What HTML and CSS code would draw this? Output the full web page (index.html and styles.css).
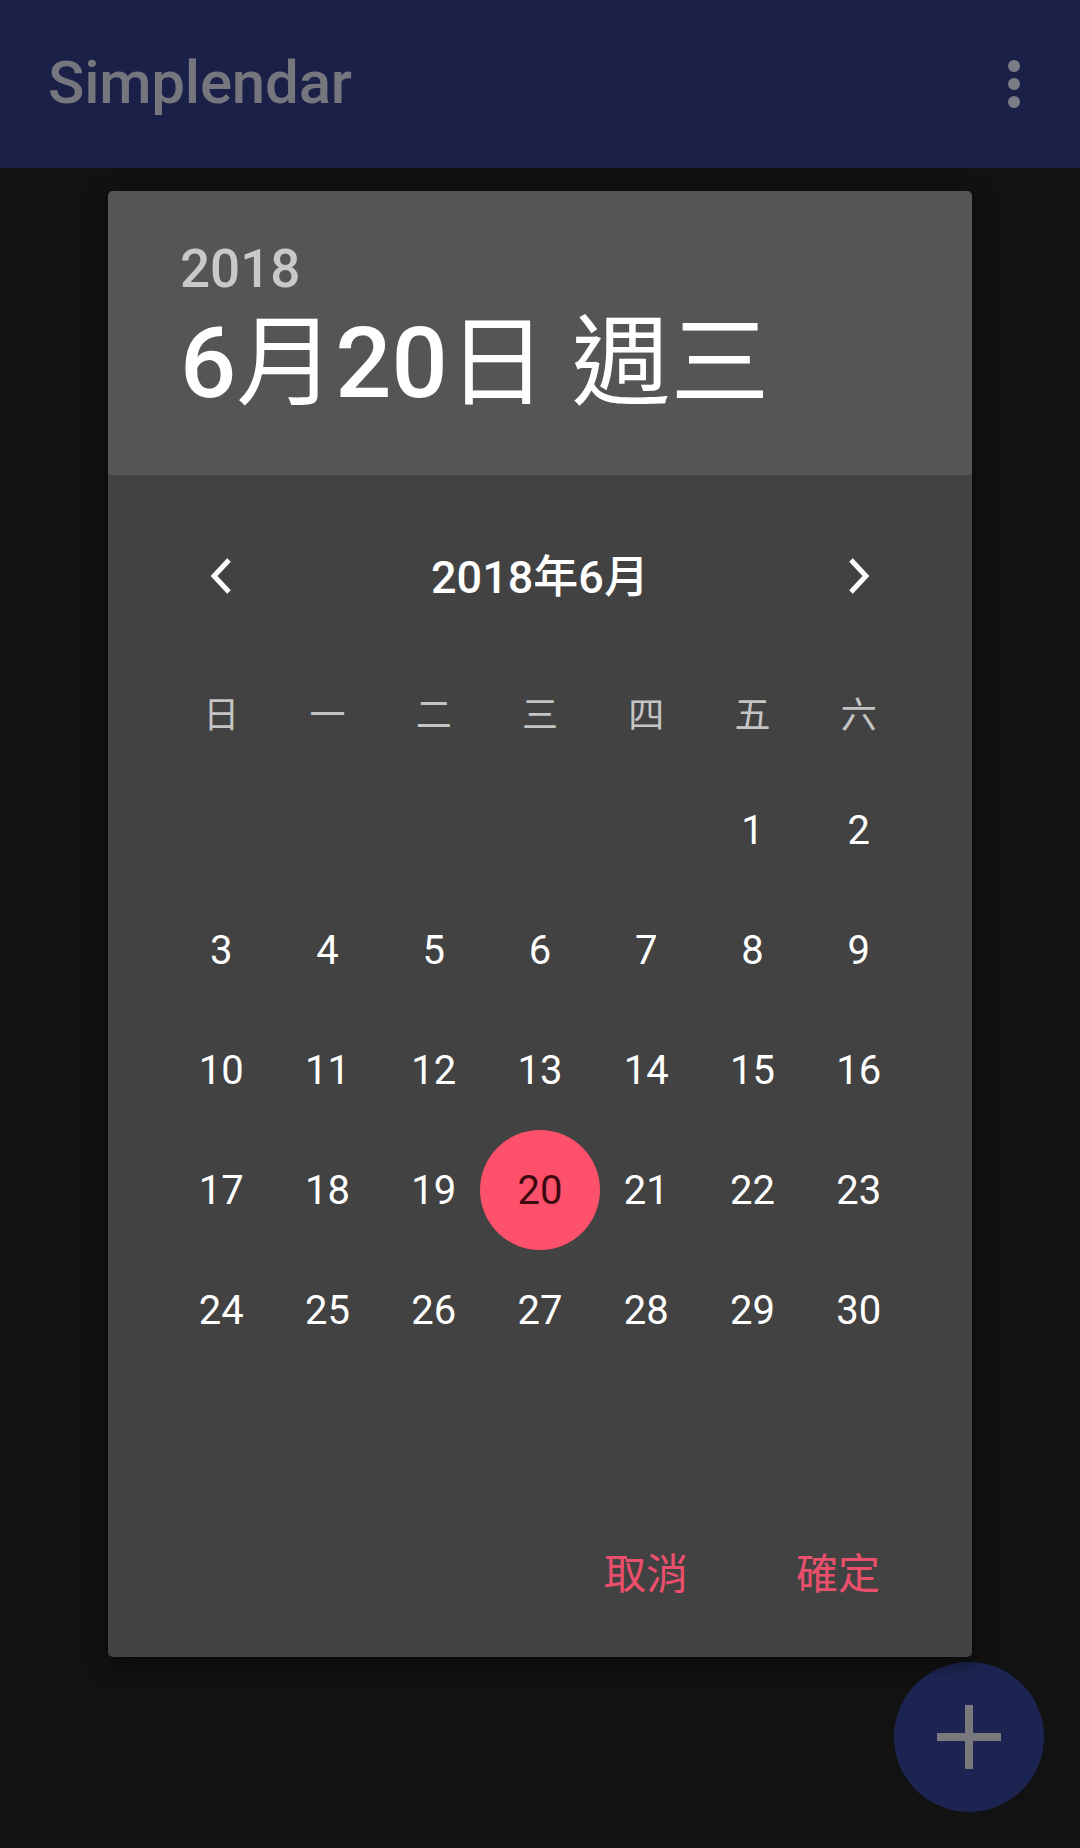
FILE: index.html
```html
<!DOCTYPE html>
<html lang="zh-Hant">
<head>
<meta charset="utf-8">
<title>Simplendar</title>
<link rel="stylesheet" href="styles.css">
</head>
<body>
<div class="app">
  <header class="appbar">
    <h1 class="appbar-title">Simplendar</h1>
    <button class="overflow" aria-label="更多選項">
      <span class="dot"></span><span class="dot"></span><span class="dot"></span>
    </button>
  </header>
  <main class="content"></main>
  <button class="fab" aria-label="新增">
    <svg viewBox="0 0 64 64" width="64" height="64"><path d="M32 0V64M0 32H64" stroke="#7a7a7e" stroke-width="8" fill="none"/></svg>
  </button>
</div>

<div class="dialog" role="dialog">
  <div class="dlg-header">
    <div class="dlg-year">2018</div>
    <div class="dlg-date">6<span class="cjk">月</span>20<span class="cjk">日 週三</span></div>
  </div>
  <div class="dlg-body">
    <div class="month-nav">
      <button class="chev" aria-label="上個月">
        <svg viewBox="0 0 24 36" width="24" height="36"><path d="M20 2L5 18L20 34" stroke="#fff" stroke-width="5" fill="none"/></svg>
      </button>
      <div class="month-label">2018年6月</div>
      <button class="chev" aria-label="下個月">
        <svg viewBox="0 0 24 36" width="24" height="36"><path d="M4 2L19 18L4 34" stroke="#fff" stroke-width="5" fill="none"/></svg>
      </button>
    </div>
    <div class="weekdays">
      <span>日</span><span>一</span><span>二</span><span>三</span><span>四</span><span>五</span><span>六</span>
    </div>
    <div class="days">
      <span></span><span></span><span></span><span></span><span></span><span>1</span><span>2</span>
      <span>3</span><span>4</span><span>5</span><span>6</span><span>7</span><span>8</span><span>9</span>
      <span>10</span><span>11</span><span>12</span><span>13</span><span>14</span><span>15</span><span>16</span>
      <span>17</span><span>18</span><span>19</span><span class="selected">20</span><span>21</span><span>22</span><span>23</span>
      <span>24</span><span>25</span><span>26</span><span>27</span><span>28</span><span>29</span><span>30</span>
    </div>
    <div class="actions">
      <button class="btn">取消</button>
      <button class="btn">確定</button>
    </div>
  </div>
</div>
</body>
</html>
```
FILE: styles.css
```css
* { box-sizing: border-box; }
html, body {
  margin: 0;
  padding: 0;
  width: 1080px;
  height: 1848px;
  background: #121212;
  font-family: Roboto, "Noto Sans CJK TC", sans-serif;
  overflow: hidden;
}
button {
  font-family: inherit;
  border: 0;
  background: none;
  padding: 0;
  margin: 0;
  cursor: pointer;
}
.app {
  height: 1848px;
  display: flex;
  flex-direction: column;
}
.appbar {
  height: 168px;
  background: #1b2049;
  display: flex;
  align-items: center;
  padding: 0 30px 0 48px;
  flex: none;
}
.appbar-title {
  margin: 0;
  font-size: 60px;
  font-weight: 500;
  color: #76767e;
  flex: 1;
  letter-spacing: -0.2px;
  transform: translateY(-2px);
}
.overflow {
  width: 72px;
  height: 72px;
  display: flex;
  flex-direction: column;
  align-items: center;
  justify-content: center;
  gap: 6px;
}
.dot {
  width: 12px;
  height: 12px;
  border-radius: 50%;
  background: #7b7c84;
}
.content { flex: 1; }
.fab {
  position: absolute;
  left: 894px;
  top: 1662px;
  width: 150px;
  height: 150px;
  border-radius: 50%;
  background: #1c2552;
  display: flex;
  align-items: center;
  justify-content: center;
}
.dialog {
  position: absolute;
  left: 108px;
  top: 191px;
  width: 864px;
  height: 1466px;
  border-radius: 5px;
  overflow: hidden;
  background: #424242;
  display: flex;
  flex-direction: column;
  box-shadow: 0 6px 20px rgba(0,0,0,0.5);
}
.dlg-header {
  height: 284px;
  background: #555555;
  padding: 52px 72px 0 72px;
  flex: none;
}
.dlg-year {
  font-size: 53px;
  line-height: 53px;
  font-weight: 500;
  color: #c9c9c9;
}
.dlg-date {
  margin-top: 18px;
  font-size: 99px;
  line-height: 99px;
  font-weight: 500;
  color: #ffffff;
  white-space: nowrap;
}
.cjk {
  font-weight: 400;
}
.dlg-body {
  flex: 1;
  display: flex;
  flex-direction: column;
  padding: 38px 60px 33px 60px;
}
.month-nav {
  height: 120px;
  display: grid;
  grid-template-columns: repeat(7, minmax(0, 1fr));
  align-items: center;
}
.chev {
  display: flex;
  align-items: center;
  justify-content: center;
  height: 120px;
  transform: translateY(3px);
}
.month-nav .chev:last-child { grid-column: 7; }
.month-label {
  grid-column: 2 / 7;
  text-align: center;
  font-size: 45px;
  font-weight: 500;
  color: #ffffff;
}
.weekdays {
  margin-top: 25px;
  height: 108px;
  display: grid;
  grid-template-columns: repeat(7, minmax(0, 1fr));
  align-items: center;
  text-align: center;
  font-family: "Noto Sans CJK TC", sans-serif;
  font-size: 36px;
  color: #c4c4c4;
}
.days {
  margin-top: 4px;
  display: grid;
  grid-template-columns: repeat(7, minmax(0, 1fr));
  grid-auto-rows: 120px;
  align-items: center;
  justify-items: center;
  font-size: 40px;
  color: #ffffff;
}
.days span {
  width: 120px;
  height: 120px;
  display: flex;
  align-items: center;
  justify-content: center;
}
.days .selected {
  background: #fd506b;
  border-radius: 50%;
  color: #3d0a12;
}
.actions {
  margin-top: auto;
  display: flex;
  justify-content: flex-end;
  margin-right: -22px;
}
.btn {
  width: 192px;
  height: 108px;
  font-family: "Noto Sans CJK TC", sans-serif;
  font-size: 42px;
  color: #ec4f6c;
}
```
